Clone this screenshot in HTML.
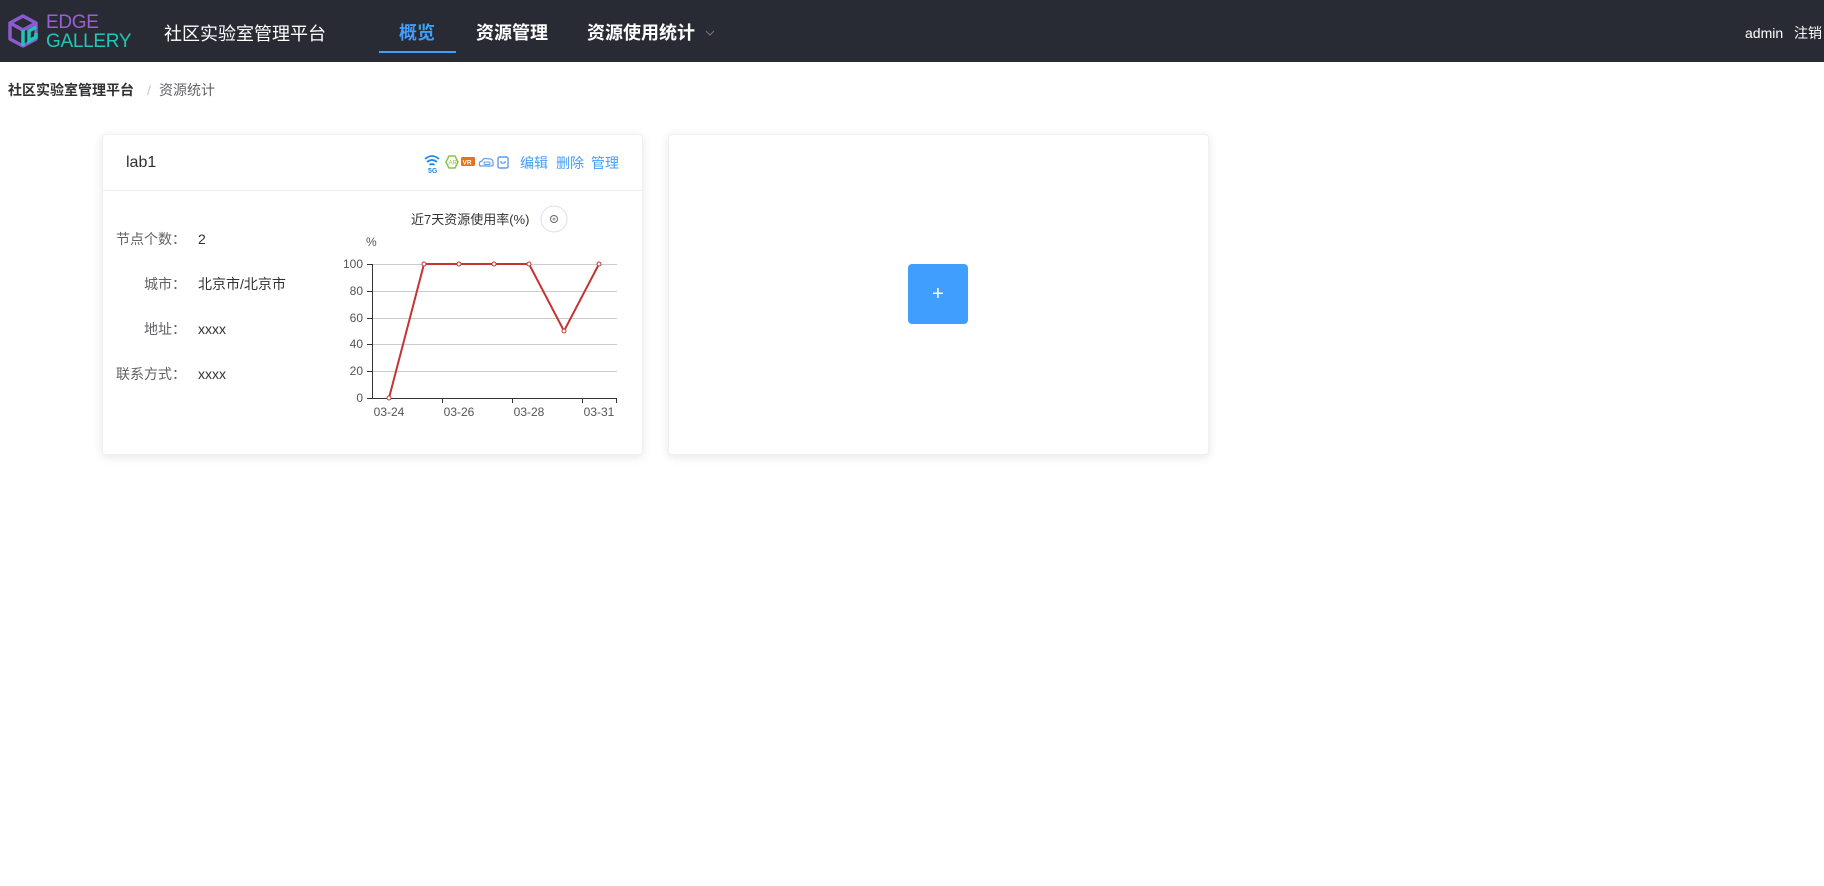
<!DOCTYPE html>
<html><head><meta charset="utf-8"><style>
*{margin:0;padding:0;box-sizing:border-box}
body{width:1824px;height:886px;background:#fff;font-family:"Liberation Sans","Noto Sans CJK SC",sans-serif;position:relative;overflow:hidden}
.nav{position:absolute;left:0;top:0;width:1824px;height:62px;background:#282b33}
.a{position:absolute;white-space:nowrap;line-height:1}
.card{position:absolute;background:#fff;border-radius:4px;box-shadow:0 2px 10px rgba(0,0,0,0.1);border:1px solid #eef0f3}
</style></head><body>
<div class="nav">
<svg class="a" style="left:7px;top:13px" width="33" height="37" viewBox="0 0 33 37">
<path d="M16 3 L29 10 L29 26 L16 33 L3 26 L3 10 Z" fill="none" stroke="#8a5bd0" stroke-width="3.5" stroke-linejoin="round"/>
<path d="M3 10 L16 17 L29 10" fill="none" stroke="#8a5bd0" stroke-width="3.5"/>
<path d="M16 17 L16 33 M29 14 L22 18 L22 28 L29 24 L29 20" fill="none" stroke="#20c4b8" stroke-width="3.5"/>
</svg>
<div class="a" style="left:46px;top:13px;font-size:19px;color:#9a5fd4;letter-spacing:-0.3px">EDGE</div>
<div class="a" style="left:46px;top:32px;font-size:19px;color:#22c6b8;letter-spacing:-0.3px">GALLERY</div>
<div class="a" style="left:164px;top:25px;font-size:18px;color:#fff">社区实验室管理平台</div>
<div class="a" style="left:399px;top:24px;font-size:18px;font-weight:bold;color:#409eff">概览</div>
<div class="a" style="left:379px;top:51px;width:77px;height:2px;background:#409eff"></div>
<div class="a" style="left:476px;top:24px;font-size:18px;font-weight:bold;color:#fff">资源管理</div>
<div class="a" style="left:587px;top:24px;font-size:18px;font-weight:bold;color:#fff">资源使用统计</div>
<svg class="a" style="left:705px;top:30px" width="10" height="6"><path d="M1 1 L5 5 L9 1" fill="none" stroke="#777" stroke-width="1"/></svg>
<div class="a" style="left:1745px;top:26px;font-size:14px;color:#fff">admin</div>
<div class="a" style="left:1794px;top:26px;font-size:14px;color:#fff">注销</div>
</div>
<div class="a" style="left:8px;top:83px;font-size:14px;font-weight:bold;color:#303133">社区实验室管理平台</div>
<div class="a" style="left:147px;top:83px;font-size:14px;color:#c0c4cc">/</div>
<div class="a" style="left:159px;top:83px;font-size:14px;color:#606266">资源统计</div>

<div class="card" style="left:102px;top:134px;width:541px;height:321px">
<div class="a" style="left:23px;top:20px;font-size:16px;color:#303133">lab1</div>
<svg class="a" style="left:320px;top:18px" width="90" height="20" viewBox="0 0 90 20">
<path d="M2 6 Q9 0 16 6 M4 9 Q9 5 14 9 M6.5 12 Q9 10 11.5 12" fill="none" stroke="#1e88e5" stroke-width="1.8"/>
<text x="5" y="20" font-size="7" font-weight="bold" fill="#1e88e5" font-family="Liberation Sans">5G</text>
<path d="M26 3 L32 3 L35 9 L32 15 L26 15 L23 9 Z" fill="none" stroke="#8bc34a" stroke-width="1.5"/>
<text x="25.5" y="11.5" font-size="6" fill="#8bc34a" font-family="Liberation Sans">AR</text>
<rect x="38" y="4" width="14" height="9" rx="1.5" fill="#e8711a"/>
<text x="39.5" y="11.5" font-size="6.5" font-weight="bold" fill="#fff" font-family="Liberation Sans">VR</text>
<path d="M57 13 Q55 9 59 8 Q61 4 65 6 Q70 5 70 10 Q71 13 68 13 Z" fill="none" stroke="#5c9ee8" stroke-width="1.2"/>
<rect x="61" y="9" width="6" height="2.5" rx="1" fill="none" stroke="#5c9ee8" stroke-width="1"/>
<rect x="75" y="4" width="10" height="11" rx="1.5" fill="none" stroke="#5c9ee8" stroke-width="1.4"/>
<path d="M78 10 L82 10 M78 8 L78 10 M82 8 L82 10" stroke="#5c9ee8" stroke-width="1.2"/>
</svg>
<div class="a" style="left:417px;top:21px;font-size:14px;color:#409eff">编辑</div>
<div class="a" style="left:453px;top:21px;font-size:14px;color:#409eff">删除</div>
<div class="a" style="left:488px;top:21px;font-size:14px;color:#409eff">管理</div>
<div class="a" style="left:0;top:55px;width:539px;height:1px;background:#ebeef5"></div>
<div class="a" style="left:13px;top:97px;font-size:14px;color:#606266">节点个数：</div>
<div class="a" style="left:95px;top:97px;font-size:14px;color:#303133">2</div>
<div class="a" style="left:41px;top:142px;font-size:14px;color:#606266">城市：</div>
<div class="a" style="left:95px;top:142px;font-size:14px;color:#303133">北京市/北京市</div>
<div class="a" style="left:41px;top:187px;font-size:14px;color:#606266">地址：</div>
<div class="a" style="left:95px;top:187px;font-size:14px;color:#303133">xxxx</div>
<div class="a" style="left:13px;top:232px;font-size:14px;color:#606266">联系方式：</div>
<div class="a" style="left:95px;top:232px;font-size:14px;color:#303133">xxxx</div>
</div>

<svg class="a" style="left:0;top:0" width="700" height="460">
<g font-family="Liberation Sans,Noto Sans CJK SC,sans-serif" fill="#333">
<text x="411" y="224" font-size="13">近7天资源使用率(%)</text>
<circle cx="554" cy="219" r="13" fill="#fff" stroke="#dde" stroke-width="1"/>
<circle cx="554" cy="219" r="3.5" fill="none" stroke="#666" stroke-width="1"/>
<path d="M552.5 219 L555.5 219 M554 217.5 L554 220.5" stroke="#666" stroke-width="0.8"/>
<text x="366" y="246" font-size="12" fill="#555">%</text>
<g stroke="#ccc" stroke-width="1">
<line x1="372" y1="264.5" x2="617" y2="264.5"/><line x1="372" y1="291.5" x2="617" y2="291.5"/><line x1="372" y1="318.5" x2="617" y2="318.5"/><line x1="372" y1="344.5" x2="617" y2="344.5"/><line x1="372" y1="371.5" x2="617" y2="371.5"/>
</g>
<g stroke="#333" stroke-width="1">
<line x1="372.5" y1="264" x2="372.5" y2="398"/><line x1="372" y1="398.5" x2="617" y2="398.5"/>
<line x1="367" y1="264.5" x2="372" y2="264.5"/><line x1="367" y1="291.5" x2="372" y2="291.5"/><line x1="367" y1="318.5" x2="372" y2="318.5"/><line x1="367" y1="344.5" x2="372" y2="344.5"/><line x1="367" y1="371.5" x2="372" y2="371.5"/><line x1="367" y1="398.5" x2="372" y2="398.5"/>
<line x1="442.5" y1="398" x2="442.5" y2="403"/><line x1="512.5" y1="398" x2="512.5" y2="403"/><line x1="582.5" y1="398" x2="582.5" y2="403"/><line x1="616.5" y1="398" x2="616.5" y2="403"/>
</g>
<g font-size="12" fill="#555" text-anchor="end">
<text x="363" y="268">100</text><text x="363" y="295">80</text><text x="363" y="322">60</text><text x="363" y="348">40</text><text x="363" y="375">20</text><text x="363" y="402">0</text>
</g>
<g font-size="12" fill="#555" text-anchor="middle">
<text x="389" y="416">03-24</text><text x="459" y="416">03-26</text><text x="529" y="416">03-28</text><text x="599" y="416">03-31</text>
</g>
<polyline points="389,398 424,264 459,264 494,264 529,264 564,331 599,264" fill="none" stroke="#c23531" stroke-width="2"/>
<g fill="#fff" stroke="#c23531" stroke-width="1">
<circle cx="389" cy="398" r="2"/><circle cx="424" cy="264" r="2"/><circle cx="459" cy="264" r="2"/><circle cx="494" cy="264" r="2"/><circle cx="529" cy="264" r="2"/><circle cx="564" cy="331" r="2"/><circle cx="599" cy="264" r="2"/>
</g>
</g>
</svg>

<div class="card" style="left:668px;top:134px;width:541px;height:321px">
<div class="a" style="left:239px;top:129px;width:60px;height:60px;background:#409eff;border-radius:4px;color:#fff;font-size:20px;text-align:center;line-height:60px">+</div>
</div>
</body></html>
